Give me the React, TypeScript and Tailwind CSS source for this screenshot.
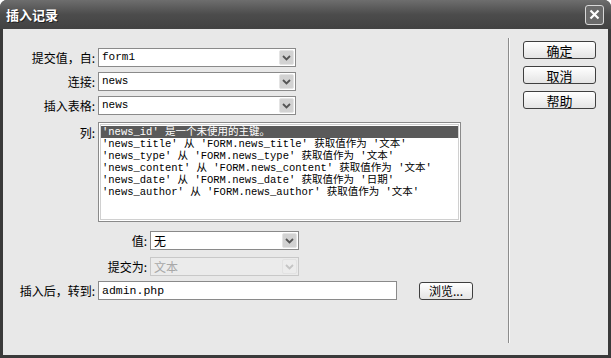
import type { ReactNode } from 'react'

const cjk = { fontFamily: '"Noto Sans CJK SC", "Noto Sans", sans-serif' }
const mono = { fontFamily: '"Liberation Mono", "Noto Sans CJK SC", monospace' }

function Arrow({ disabled }: { disabled?: boolean }) {
  return (
    <span
      className={`flex h-[15px] w-[15px] shrink-0 items-center justify-center rounded-[2px] border ${
        disabled ? 'border-[#e2e2e2] bg-[#ececec]' : 'border-[#e4e4e4] bg-[#d2d2d2]'
      }`}
    >
      <svg width="9" height="6" viewBox="0 0 9 6">
        <path
          d="M1 1 L4.5 4.5 L8 1"
          fill="none"
          stroke={disabled ? '#c4c4c4' : '#555'}
          strokeWidth="1.8"
        />
      </svg>
    </span>
  )
}

function Select({
  value,
  width,
  disabled,
  cjkText,
}: {
  value: string
  width: string
  disabled?: boolean
  cjkText?: boolean
}) {
  return (
    <div
      className={`flex h-[19px] items-center justify-between border pr-[1px] pl-[3px] ${width} ${
        disabled ? 'border-[#c8c8c8] bg-[#ebebeb] text-[#a8a8a8]' : 'border-[#8a8a8a] bg-white text-black'
      }`}
    >
      <span className={cjkText ? 'text-[12px]' : 'text-[11px]'} style={cjkText ? cjk : mono}>
        {value}
      </span>
      <Arrow disabled={disabled} />
    </div>
  )
}

function Label({ children, width }: { children: ReactNode; width: string }) {
  return (
    <span className={`shrink-0 text-right text-[12px] text-black ${width}`} style={cjk}>
      {children}
    </span>
  )
}

function PushButton({ children, className = '' }: { children: ReactNode; className?: string }) {
  return (
    <button
      className={`flex items-center justify-center rounded-[3px] border border-[#3f3f3f] bg-gradient-to-b from-white to-[#e4e4e4] text-[12px] leading-none text-black ${className}`}
      style={cjk}
    >
      {children}
    </button>
  )
}

const columns = [
  "'news_id' 是一个未使用的主键。",
  "'news_title' 从 'FORM.news_title' 获取值作为 '文本'",
  "'news_type' 从 'FORM.news_type' 获取值作为 '文本'",
  "'news_content' 从 'FORM.news_content' 获取值作为 '文本'",
  "'news_date' 从 'FORM.news_date' 获取值作为 '日期'",
  "'news_author' 从 'FORM.news_author' 获取值作为 '文本'",
]

export default function App() {
  return (
    <div className="h-[358px] w-[611px] bg-white">
      <div className="flex h-full flex-col overflow-hidden rounded-t-[7px] bg-[#3a3a3a]">
        {/* title bar */}
        <div className="flex h-[29px] shrink-0 items-center justify-between bg-gradient-to-b from-[#6e6e6e] via-[#4c4c4c] to-[#424242] pr-[7px] pl-[6px]">
          <span className="text-[13px] font-bold text-white [text-shadow:1px_1px_0_#222]" style={cjk}>
            插入记录
          </span>
          <span className="flex h-[20px] w-[19px] items-center justify-center rounded-[3px] border border-[#d8d8d8] bg-[#6a6a6a]">
            <svg width="11" height="11" viewBox="0 0 11 11">
              <path d="M1.5 1.5 L9.5 9.5 M9.5 1.5 L1.5 9.5" stroke="white" strokeWidth="2.2" />
            </svg>
          </span>
        </div>

        {/* body */}
        <div className="mx-[3px] mb-[3px] flex flex-1 bg-[#e8e8e8]">
          {/* form */}
          <div className="flex w-[505px] flex-col pt-[19px]">
            <div className="flex items-center gap-[3px]">
              <Label width="w-[92px]">提交值，自:</Label>
              <Select value="form1" width="w-[198px]" />
            </div>
            <div className="mt-[5px] flex items-center gap-[3px]">
              <Label width="w-[92px]">连接:</Label>
              <Select value="news" width="w-[198px]" />
            </div>
            <div className="mt-[5px] flex items-center gap-[3px]">
              <Label width="w-[92px]">插入表格:</Label>
              <Select value="news" width="w-[198px]" />
            </div>

            <div className="mt-[7px] flex items-start gap-[3px]">
              <Label width="w-[92px] pt-[2px]">列:</Label>
              <div className="h-[100px] w-[363px] border border-[#8a8a8a] bg-white p-[1px]">
                <div className="border border-[#d0d0d0] h-full pt-[1px]">
                  {columns.map((c, i) => (
                    <div
                      key={c}
                      className={`h-[12px] pl-[1px] text-[10.5px] leading-[12px] whitespace-pre ${
                        i === 0 ? 'bg-[#5a5a5a] text-white' : 'text-black'
                      }`}
                      style={mono}
                    >
                      {c}
                    </div>
                  ))}
                </div>
              </div>
            </div>

            <div className="mt-[9px] flex items-center gap-[3px]">
              <Label width="w-[144px]">值:</Label>
              <Select value="无" width="w-[149px]" cjkText />
            </div>
            <div className="mt-[7px] flex items-center gap-[3px]">
              <Label width="w-[144px]">提交为:</Label>
              <Select value="文本" width="w-[149px]" disabled cjkText />
            </div>

            <div className="mt-[5px] flex items-center gap-[3px]">
              <Label width="w-[92px]">插入后，转到:</Label>
              <div className="flex h-[19px] w-[299px] items-center border border-[#8a8a8a] bg-white pl-[3px]">
                <span className="text-[11.5px] text-black" style={mono}>
                  admin.php
                </span>
              </div>
              <PushButton className="ml-[19px] h-[18px] w-[54px]">浏览...</PushButton>
            </div>
          </div>

          {/* separator */}
          <div className="mt-[9px] mb-[12px] w-[1px] bg-[#8c8c8c] shadow-[1px_0_0_#fafafa]" />

          {/* action buttons */}
          <div className="flex flex-col gap-[7px] pt-[12px] pl-[14px]">
            <PushButton className="h-[18px] w-[73px] text-[13px]">确定</PushButton>
            <PushButton className="h-[18px] w-[73px] text-[13px]">取消</PushButton>
            <PushButton className="h-[18px] w-[73px] text-[13px]">帮助</PushButton>
          </div>
        </div>
      </div>
    </div>
  )
}
